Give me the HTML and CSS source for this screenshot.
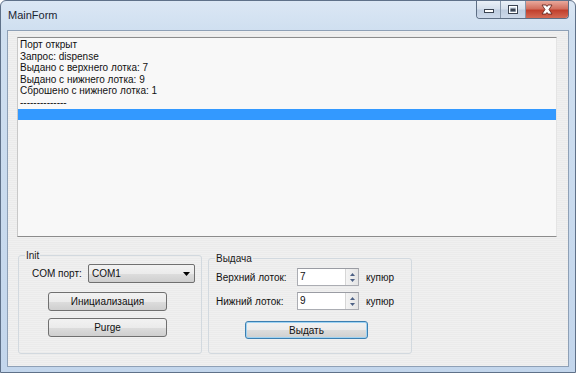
FILE: index.html
```html
<!DOCTYPE html>
<html lang="ru">

<head>
    <meta charset="UTF-8">
    <title>MainForm</title>
    <link rel="stylesheet" href="styles.css">
</head>

<body>
    <div class="window">
        <div class="titlebar">
            <span class="title">MainForm</span>
            <div class="caption-buttons">
                <div class="cap cap-min">
                    <svg width="24" height="17" viewBox="0 0 24 17">
                        <rect x="7.5" y="8.5" width="9" height="3" fill="#fff" stroke="#3b4452" />
                    </svg>
                </div>
                <div class="cap cap-max">
                    <svg width="24" height="17" viewBox="0 0 24 17">
                        <rect x="7.5" y="4.5" width="9" height="8" fill="none" stroke="#3b4452" />
                        <rect x="8.5" y="5.5" width="7" height="6" fill="none" stroke="#fff" />
                        <rect x="9.5" y="7.5" width="5" height="3" fill="#3b4452" />
                    </svg>
                </div>
                <div class="cap cap-close">
                    <svg width="42" height="17" viewBox="0 0 42 17">
                        <path d="M16 4h4l1 1.5 1-1.5h4l-3 4.5 3 4.5h-4l-1-1.5-1 1.5h-4l3-4.5z" fill="#fff"
                            stroke="#5b1a14" stroke-width="0.8" />
                    </svg>
                </div>
            </div>
        </div>

        <div class="client">
            <ul class="log">
                <li>Порт открыт</li>
                <li>Запрос: dispense</li>
                <li>Выдано с верхнего лотка: 7</li>
                <li>Выдано с нижнего лотка: 9</li>
                <li>Сброшено с нижнего лотка: 1</li>
                <li>--------------</li>
                <li class="selected"></li>
            </ul>

            <div class="groups">
                <fieldset class="group group-init">
                    <legend>Init</legend>
                    <div class="row port-row">
                        <span class="field-label port-label">COM порт:</span>
                        <div class="combo">
                            <span>COM1</span>
                            <svg class="combo-arrow" width="7" height="4" viewBox="0 0 7 4">
                                <path d="M0 0h7L3.5 4z" fill="#000" />
                            </svg>
                        </div>
                    </div>
                    <button class="btn btn-init">Инициализация</button>
                    <button class="btn btn-purge">Purge</button>
                </fieldset>

                <fieldset class="group group-out">
                    <legend>Выдача</legend>
                    <div class="row">
                        <span class="field-label out-label">Верхний лоток:</span>
                        <div class="spin">
                            <span class="spin-value">7</span>
                            <div class="spin-buttons">
                                <svg width="5" height="3" viewBox="0 0 5 3"><path d="M0 3h5L2.5 0z" fill="#4d6185" /></svg>
                                <svg width="5" height="3" viewBox="0 0 5 3"><path d="M0 0h5L2.5 3z" fill="#4d6185" /></svg>
                            </div>
                        </div>
                        <span class="unit">купюр</span>
                    </div>
                    <div class="row row-second">
                        <span class="field-label out-label">Нижний лоток:</span>
                        <div class="spin">
                            <span class="spin-value">9</span>
                            <div class="spin-buttons">
                                <svg width="5" height="3" viewBox="0 0 5 3"><path d="M0 3h5L2.5 0z" fill="#4d6185" /></svg>
                                <svg width="5" height="3" viewBox="0 0 5 3"><path d="M0 0h5L2.5 3z" fill="#4d6185" /></svg>
                            </div>
                        </div>
                        <span class="unit">купюр</span>
                    </div>
                    <button class="btn btn-default btn-issue">Выдать</button>
                </fieldset>
            </div>
        </div>
    </div>
</body>

</html>
```

FILE: styles.css
```css
html,
body {
    margin: 0;
    padding: 0;
    width: 576px;
    height: 373px;
    overflow: hidden;
    background-color: #ffffff;
}

body {
    font-family: "Liberation Sans", Arial, sans-serif;
    font-size: 10px;
    color: #111;
}

.window {
    box-sizing: border-box;
    width: 576px;
    height: 373px;
    padding: 0 6px 6px 6px;
    border: 1px solid #5f7189;
    border-radius: 6px 6px 0 0;
    background: linear-gradient(to bottom, #dbe7f4 0, #cfdff0 30px, #c3d6ec 100%);
}

.titlebar {
    height: 29px;
    display: flex;
    align-items: flex-start;
}

.title {
    margin-top: 8px;
    margin-left: 1px;
    font-size: 11px;
    color: #1b2633;
}

.caption-buttons {
    margin-left: auto;
    display: flex;
    border: 1px solid #5d6e84;
    border-top: none;
    border-radius: 0 0 4px 4px;
    overflow: hidden;
    height: 17px;
}

.cap {
    height: 17px;
    width: 24px;
}

.cap svg {
    display: block;
}

.cap-min,
.cap-max {
    background: linear-gradient(to bottom, #eaf0f7 0, #d6e0ec 45%, #bfcde0 55%, #ccd9ea 100%);
    border-right: 1px solid #8797ab;
}

.cap-min {
    width: 23px;
}

.cap-close {
    width: 42px;
    background: linear-gradient(to bottom, #e9a99c 0, #d2705f 45%, #c1402d 55%, #d46a54 100%);
}

.client {
    box-sizing: border-box;
    height: 337px;
    border: 1px solid #8ea0b6;
    background-color: #eeeeee;
    background-image: repeating-linear-gradient(to bottom, #f0f0f0 0, #f0f0f0 1px, #ebebeb 1px, #ebebeb 2px);
}

.log {
    box-sizing: border-box;
    list-style: none;
    margin: 6px 0 0 9px;
    padding: 1px 0 0 0;
    width: 540px;
    height: 200px;
    background-color: #f8f8f8;
    border: 1px solid #8c8c8c;
    border-left-color: #c8c8c8;
    border-right-color: #e4e4e4;
}

.log li {
    height: 11.6px;
    line-height: 11.6px;
    padding-left: 2px;
    white-space: nowrap;
}

.log li.selected {
    background-color: #3399ff;
}

.groups {
    display: flex;
    align-items: flex-start;
    margin-top: 12px;
}

.group {
    box-sizing: border-box;
    margin: 0;
    padding: 0 6px;
    border: 1px solid #d2d9df;
    border-radius: 3px;
}

.group legend {
    padding: 0 1px;
    line-height: 13px;
    color: #1a1a1a;
}

.group-init {
    margin-left: 10px;
    width: 181px;
    height: 105px;
}

.group-out {
    margin-left: 6px;
    margin-top: 3px;
    width: 204px;
    height: 102px;
}

.row {
    display: flex;
    align-items: center;
}

.port-row {
    margin-top: 2px;
    margin-left: 7px;
}

.port-label {
    width: 56px;
}

.combo {
    box-sizing: border-box;
    width: 107px;
    height: 19px;
    display: flex;
    align-items: center;
    padding: 0 4px 0 3px;
    border: 1px solid #707070;
    border-radius: 2px;
    background: linear-gradient(to bottom, #f2f2f2 0, #ebebeb 50%, #dddddd 50%, #cfcfcf 100%);
}

.combo-arrow {
    margin-left: auto;
}

.btn {
    box-sizing: border-box;
    display: block;
    height: 19px;
    padding: 0;
    font-family: "Liberation Sans", Arial, sans-serif;
    font-size: 10px;
    color: #111;
    border: 1px solid #707070;
    border-radius: 3px;
    background: linear-gradient(to bottom, #f2f2f2 0, #ebebeb 50%, #dddddd 50%, #cfcfcf 100%);
}

.btn-init {
    width: 119px;
    margin: 9px 0 0 23px;
}

.btn-purge {
    width: 119px;
    margin: 7px 0 0 23px;
}

.btn-default {
    border-color: #3c7fb1;
    box-shadow: inset 0 0 0 1px #9fd3f3;
}

.btn-issue {
    width: 123px;
    height: 18px;
    margin: 11px 0 0 30px;
}

.out-label {
    width: 81px;
    margin-left: 1px;
}

.group-out .row {
    margin-top: 3px;
}

.group-out .row-second {
    margin-top: 6px;
}

.spin {
    box-sizing: border-box;
    width: 62px;
    height: 18px;
    display: flex;
    border: 1px solid #abadb3;
    border-top-color: #9a9ca3;
    background-color: #ffffff;
}

.spin-value {
    flex: 1;
    padding: 2px 0 0 2px;
}

.spin-buttons {
    width: 12px;
    display: flex;
    flex-direction: column;
    align-items: center;
    justify-content: space-around;
    padding: 2px 0;
    background: linear-gradient(to right, #f4f4f4, #e4e4e4);
    border-left: 1px solid #d6d6d6;
}

.unit {
    margin-left: 7px;
}
```
